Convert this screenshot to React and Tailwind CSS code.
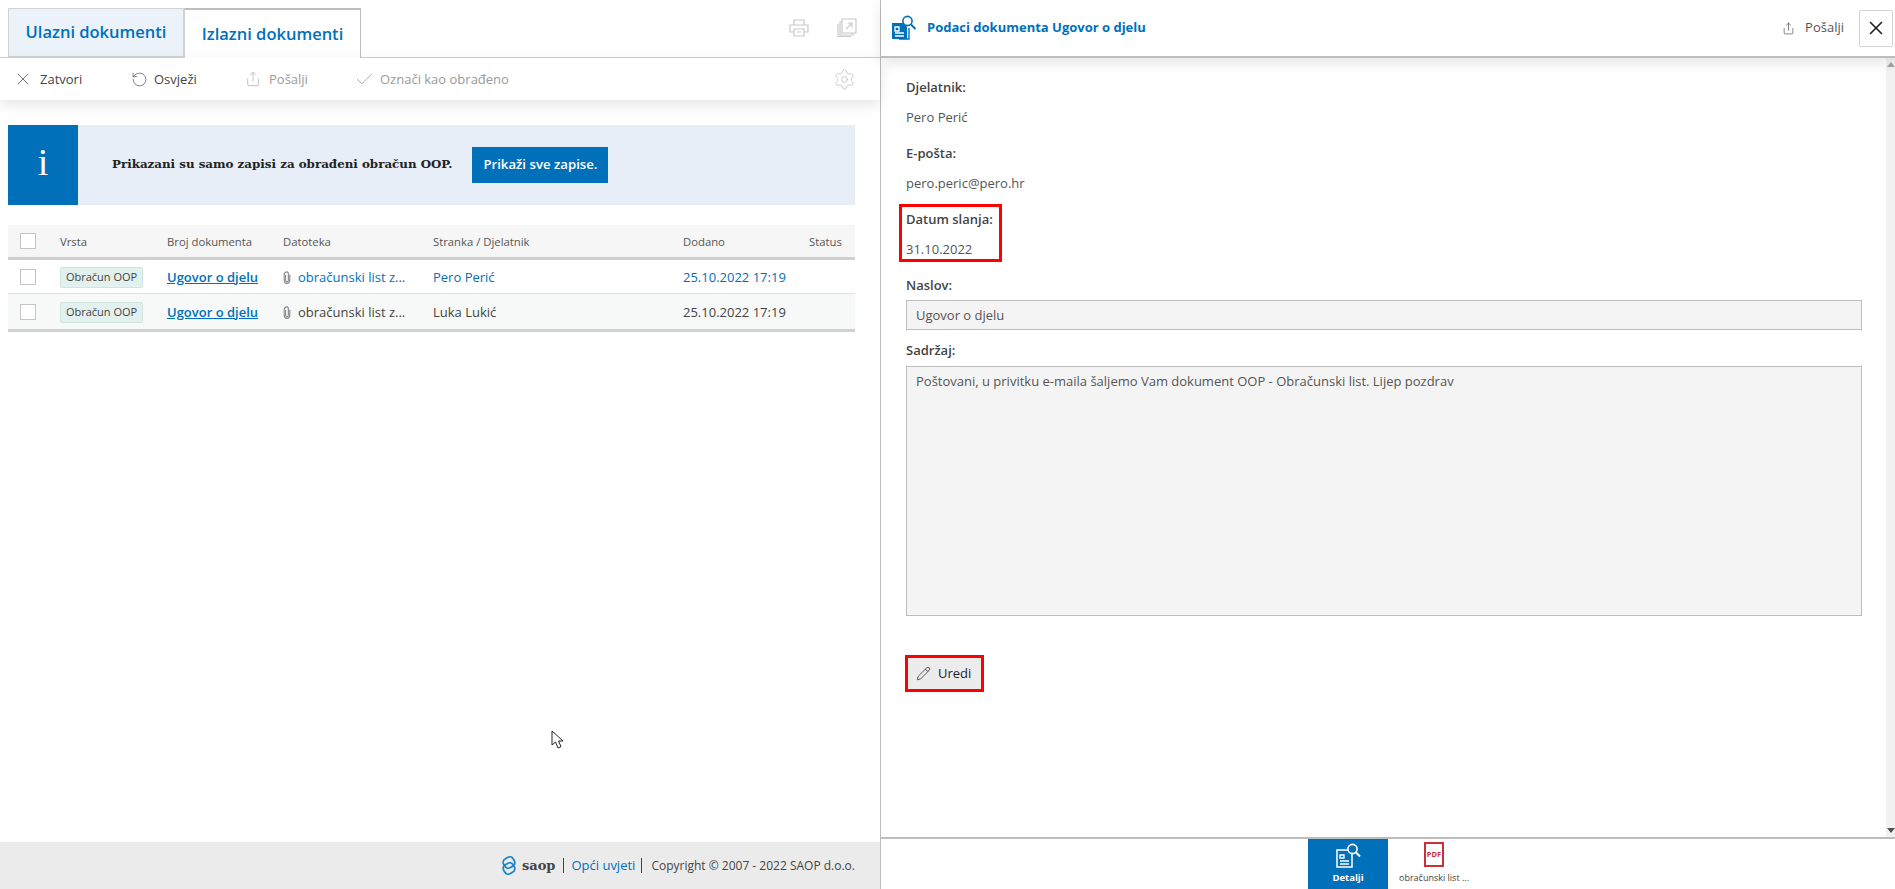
import { Check, Pencil, RotateCcw, Settings, Share, X } from 'lucide-react'

const DocSearchIcon = ({ className }) => (
    <svg viewBox="0 0 26 26" className={className} fill="none">
        <path d="M1 8h11l4 4v12H1z" fill="#0070bb" />
        <path d="M18 13v11H8" stroke="#0070bb" strokeWidth="1.4" />
        <path d="M4 12h4v4H4zM4 18h9M4 21h9" stroke="#ffffff" strokeWidth="1.3" />
        <circle cx="16.500" cy="6" r="4.600" stroke="#0070bb" strokeWidth="1.6" />
        <path d="M20 9.500l4.500 4.500" stroke="#0070bb" strokeWidth="2" />
    </svg>
)

const SaopLogo = () => (
    <svg viewBox="0 0 16 21" className="h-[21px] w-4" fill="none" stroke="#1f86c8" strokeWidth="1.8">
        <rect x="2.500" y="2.500" width="11" height="10" rx="4" transform="rotate(-32 8 7.500)" />
        <rect x="2.500" y="8.500" width="11" height="10" rx="4" transform="rotate(-32 8 13.500)" />
    </svg>
)

const ClipIcon = () => (
    <svg viewBox="0 0 8 14" className="mr-[7px] h-[13px] w-2" fill="none" stroke="#8a8a8a" strokeWidth="1.2">
        <path d="M2.500 4v6c0 1 .6 1.500 1.500 1.500s1.500-.5 1.500-1.500V3.500C5.500 2 5 1 4 1S1 2 1 3.500V10c0 2 1.200 3.300 3 3.300S7 12 7 10V4" />
    </svg>
)

const PrintIcon = () => (
    <svg viewBox="0 0 20 18" className="h-[18px] w-5" fill="none" stroke="#c9c9c9" strokeWidth="1.2">
        <path d="M5 6V1h10v5M5 13H1V6h18v7h-4" />
        <path d="M5 10h10v7H5zM8 13h4" />
    </svg>
)

const OpenCopyIcon = () => (
    <svg viewBox="0 0 20 19" className="h-[19px] w-5" fill="none" stroke="#c9c9c9" strokeWidth="1.2">
        <path d="M5 1h14v14H5z" />
        <path d="M5 4H3v13h13v-2M1 6v12.500h13" />
        <path d="M9 11l6-6M10.500 5H15v4.500" />
    </svg>
)

const ToolItem = ({ icon: Icon, size, gap, label, muted = false, className = '' }) => (
    <div className={`flex items-center ${muted ? 'text-[#9a9a9a]' : 'text-[#444]'} ${className}`}>
        <Icon size={size} strokeWidth={1} className={`${muted ? 'text-[#a5a5a5]' : 'text-[#555]'} ${gap}`} />
        <span className="pt-px">{label}</span>
    </div>
)

const Checkbox = () => <div className="h-4 w-4 border border-[#c4c4c4] bg-white" />

const Field = ({ label, value }) => (
    <div className="mb-4">
        <div className="h-5 text-[13px] font-semibold leading-5 text-[#444]">{label}</div>
        <div className="mt-[10px] h-5 text-[13px] leading-5 text-[#555]">{value}</div>
    </div>
)

const rows = [
    { name: 'Pero Perić', link: true, bg: 'bg-white', h: 'h-[34px]' },
    { name: 'Luka Lukić', link: false, bg: 'bg-[#f6f9f8]', h: 'h-[35px]' }
]

const App = () => {
    return (
        <div className="relative flex h-screen overflow-hidden bg-white text-[13px] text-[#444] [font-family:'Open_Sans',sans-serif]">
            <div className="flex w-[880px] flex-col">
                <div className="flex h-[58px] items-start border-b border-[#cfcfcf] pl-2 pt-2">
                    <div className="flex h-[50px] w-[176px] items-center justify-center border border-b-2 border-[#d2d2d2] bg-[#ebf2fa] text-[16.5px] font-semibold text-[#0070bb]">
                        Ulazni dokumenti
                    </div>
                    <div className="flex h-[50px] w-[177px] items-center justify-center border-x border-t-2 border-[#bdbdbd] border-l-[#d2d2d2] bg-white text-[16.5px] font-semibold text-[#0070bb]">
                        Izlazni dokumenti
                    </div>
                    <div className="ml-auto mr-[23px] mt-[10px] flex items-center gap-7">
                        <PrintIcon />
                        <OpenCopyIcon />
                    </div>
                </div>

                <div className="relative flex h-[42px] items-center pl-[13px] pr-[24px] shadow-[0_5px_14px_rgba(0,0,0,0.1)]">
                    <ToolItem icon={X} size={20} gap="mr-[7px]" label="Zatvori" className="w-[118px]" />
                    <ToolItem icon={RotateCcw} size={17} gap="mr-[6px]" label="Osvježi" className="w-[114px]" />
                    <ToolItem icon={Share} size={16} gap="mr-2" label="Pošalji" muted className="w-[109px]" />
                    <ToolItem icon={Check} size={21} gap="mr-[5px]" label="Označi kao obrađeno" muted />
                    <Settings size={23} strokeWidth={1} className="ml-auto text-[#c9c9c9]" />
                </div>

                <div className="mx-2 mt-[25px] flex h-20 w-[847px] items-center bg-[#e7eef7]">
                    <div className="flex h-full w-[70px] items-center justify-center bg-[#0070bb] pb-[6px] text-[38px] text-white [font-family:'Liberation_Serif',serif]">
                        i
                    </div>
                    <span className="ml-[34px] text-[11.87px] font-bold text-[#222] [font-family:'DejaVu_Serif',serif]">
                        Prikazani su samo zapisi za obrađeni obračun OOP.
                    </span>
                    <div className="ml-5 flex h-9 w-[136px] items-center justify-center bg-[#0070bb] text-[13.2px] font-semibold text-white">
                        Prikaži sve zapise.
                    </div>
                </div>

                <div className="mx-2 mt-5 w-[847px] border-b-[3px] border-[#d0d0d0]">
                    <div className="grid h-[35px] grid-cols-[52px_107px_116px_150px_250px_126px_46px] items-center border-b-[3px] border-[#d0d0d0] bg-[#f6f6f6] text-[11.3px] text-[#555]">
                        <div className="pl-3"><Checkbox /></div>
                        <div className="pt-[2px]">Vrsta</div>
                        <div className="pt-[2px]">Broj dokumenta</div>
                        <div className="pt-[2px]">Datoteka</div>
                        <div className="pt-[2px]">Stranka / Djelatnik</div>
                        <div className="pt-[2px]">Dodano</div>
                        <div className="pt-[2px]">Status</div>
                    </div>
                    {rows.map((row, i) => (
                        <div key={row.name} className={`grid ${row.h} grid-cols-[52px_107px_116px_150px_250px_126px_46px] items-center ${row.bg} ${i === 0 ? 'border-b border-[#e2e2e2]' : ''}`}>
                            <div className="pl-3"><Checkbox /></div>
                            <div className="pt-px">
                                <span className="inline-flex h-[21px] w-[83px] items-center justify-center rounded-[2px] border border-[#cfe6e0] bg-[#e3f1ee] text-[11px] text-[#444]">Obračun OOP</span>
                            </div>
                            <div className="pt-[2px] font-semibold text-[#0070bb] underline">Ugovor o djelu</div>
                            <div className={`flex items-center pt-[2px] ${row.link ? 'text-[#0070bb]' : 'text-[#444]'}`}>
                                <ClipIcon />
                                obračunski list z...
                            </div>
                            <div className={`pt-[2px] ${row.link ? 'text-[#0070bb]' : 'text-[#444]'}`}>{row.name}</div>
                            <div className={`pt-[2px] ${row.link ? 'text-[#0070bb]' : 'text-[#444]'}`}>25.10.2022 17:19</div>
                            <div />
                        </div>
                    ))}
                </div>

                <div className="mt-auto flex h-[47px] items-center justify-end bg-[#ebebeb] pr-[25px] text-[13px]">
                    <SaopLogo />
                    <span className="ml-[5px] text-[13px] font-bold text-[#444] [font-family:'DejaVu_Serif',serif]">saop</span>
                    <span className="ml-2 h-[15px] w-px bg-[#444]" />
                    <span className="ml-[7px] text-[#0070bb]">Opći uvjeti</span>
                    <span className="ml-[6px] h-[15px] w-px bg-[#444]" />
                    <span className="ml-[9px] text-[12px] text-[#444]">Copyright © 2007 - 2022 SAOP d.o.o.</span>
                </div>
            </div>

            <div className="flex flex-1 flex-col border-l border-[#bdbdbd]">
                <div className="relative flex h-[58px] items-center border-b-2 border-[#bdbdbd] pl-[10px] shadow-[0_5px_14px_rgba(0,0,0,0.1)]">
                    <DocSearchIcon className="h-[26px] w-[26px]" />
                    <span className="ml-[10px] text-[13px] font-bold text-[#0070bb]">Podaci dokumenta Ugovor o djelu</span>
                    <Share size={13} strokeWidth={1.2} className="ml-auto text-[#444]" />
                    <span className="ml-[10px] text-[13px] text-[#555]">Pošalji</span>
                    <div className="ml-[15px] mr-[2px] flex h-[37px] w-[34px] items-center justify-center rounded-[2px] border border-[#d5d5d5]">
                        <X size={22} strokeWidth={1.8} className="text-[#222]" />
                    </div>
                </div>

                <div className="flex min-h-0 flex-1">
                    <div className="flex-1 pl-[25px] pr-6 pt-[19px]">
                        <Field label="Djelatnik:" value="Pero Perić" />
                        <Field label="E-pošta:" value="pero.peric@pero.hr" />
                        <div className="relative mb-4">
                            <div className="h-5 text-[13px] font-semibold leading-5 text-[#444]">Datum slanja:</div>
                            <div className="mt-[10px] h-5 text-[13px] leading-5 text-[#555]">31.10.2022</div>
                            <div className="absolute -left-[7px] -top-[5px] h-[58px] w-[103px] border-[3px] border-[#ff0000]" />
                        </div>
                        <div className="h-5 text-[13px] font-semibold leading-5 text-[#444]">Naslov:</div>
                        <div className="mt-[5px] flex h-[30px] items-center border border-[#bdbdbd] bg-[#f4f4f4] px-[9px] pt-px text-[#555]">Ugovor o djelu</div>
                        <div className="mt-[10px] h-5 text-[13px] font-semibold leading-5 text-[#444]">Sadržaj:</div>
                        <div className="mt-[6px] h-[250px] border border-[#bdbdbd] bg-[#f4f4f4] px-[9px] py-[5px] text-[#555]">
                            Poštovani, u privitku e-maila šaljemo Vam dokument OOP - Obračunski list. Lijep pozdrav
                        </div>
                        <div className="-ml-px mt-[39px] flex h-[37px] w-[79px] items-center border-[3px] border-[#ff0000] bg-[#ececec] pl-2 text-[#223]">
                            <Pencil size={15} strokeWidth={1.4} className="text-[#444]" />
                            <span className="ml-[7px] font-medium">Uredi</span>
                        </div>
                    </div>
                    <div className="flex w-[9px] flex-col items-center justify-between bg-[#f1f1f1] py-1">
                        <div className="h-0 w-0 border-x-[4px] border-b-[5px] border-x-transparent border-b-[#a3a3a3]" />
                        <div className="h-0 w-0 border-x-[4px] border-t-[5px] border-x-transparent border-t-[#505050]" />
                    </div>
                </div>

                <div className="flex h-[52px] justify-center border-t-2 border-[#bdbdbd] pl-3">
                    <div className="flex w-20 flex-col items-center bg-[#0070bb] pt-1 text-[9.5px] font-bold text-white">
                        <svg viewBox="0 0 26 26" className="h-[26px] w-[26px]" fill="none">
                            <path d="M2 7h11l4 4v13H2z" stroke="#fff" strokeWidth="1.5" />
                            <path d="M5 12h4v3H5zM5 18h9M5 21h9" stroke="#fff" strokeWidth="1.4" />
                            <circle cx="17.500" cy="6" r="4.600" fill="#0070bb" stroke="#fff" strokeWidth="1.6" />
                            <path d="M21 9.500l4 4" stroke="#fff" strokeWidth="2" />
                        </svg>
                        <span className="mt-[2px]">Detalji</span>
                    </div>
                    <div className="flex w-[92px] flex-col items-center pt-[3px] text-[9px] text-[#444]">
                        <div className="flex h-[25px] w-5 items-center justify-center border-2 border-[#c8303a] text-[7.5px] font-bold leading-none text-[#c8303a]">PDF</div>
                        <span className="mt-[4px]">obračunski list ...</span>
                    </div>
                </div>
            </div>

            <svg viewBox="0 0 14 20" className="absolute left-[551px] top-[730px] h-5 w-[14px]" fill="#fff" stroke="#222" strokeWidth="1">
                <path d="M1 1v14l3.500-3 2.500 6 3-1.300-2.500-5.700h4.500z" />
            </svg>
        </div>
    )
}

export default App
